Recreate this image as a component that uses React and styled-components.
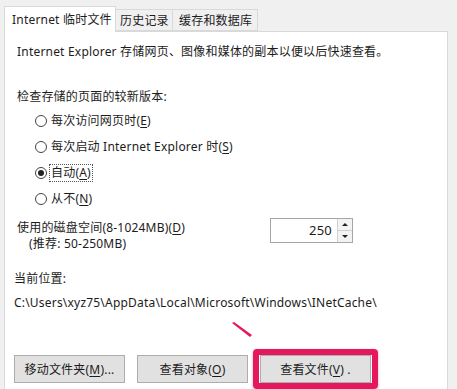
import React from "react";
import styled, { createGlobalStyle } from "styled-components";

const Global = createGlobalStyle`
  html, body { margin: 0; padding: 0; background: #f0f0f0; overflow: hidden; }
  * { box-sizing: border-box; }
`;

const FONT = `"Noto Sans", "Noto Sans CJK SC", sans-serif`;

const Dialog = styled.div`
  position: relative;
  width: 457px;
  height: 389px;
  padding: 5px 0 0 4px;
  font-family: ${FONT};
  font-size: 12px;
  letter-spacing: 0.2px;
  color: #1c1c1c;
  background: #f0f0f0;
  overflow: hidden;
`;

const TabBar = styled.div`
  display: flex;
  align-items: flex-end;
  height: 26px;
`;

const Tab = styled.div`
  position: relative;
  width: ${(p) => p.$w}px;
  height: ${(p) => (p.$active ? 26 : 22)}px;
  padding: 0 ${(p) => p.$pad || 4}px;
  margin-left: ${(p) => (p.$first ? 0 : -1)}px;
  margin-bottom: ${(p) => (p.$active ? -1 : 0)}px;
  display: flex;
  align-items: center;
  background: ${(p) => (p.$active ? "#fff" : "#f0f0f0")};
  border: 1px solid #d9d9d9;
  border-bottom: ${(p) => (p.$active ? "none" : "1px solid #d9d9d9")};
  z-index: ${(p) => (p.$active ? 2 : 1)};
  white-space: nowrap;
  line-height: 18px;
  padding-top: ${(p) => (p.$active ? 0 : 1)}px;
`;

const Panel = styled.div`
  width: 444px;
  height: 372px;
  background: #fff;
  border: 1px solid #d9d9d9;
  padding: 11px 0 0 12px;
`;

const Line = styled.div`
  line-height: 18px;
  height: 18px;
  white-space: nowrap;
  margin-top: ${(p) => p.$mt || 0}px;
  margin-left: ${(p) => p.$ml || 0}px;
`;

const RadioList = styled.div`
  margin-top: 2px;
  margin-left: 18px;
  display: flex;
  flex-direction: column;
`;

const RadioRow = styled.div`
  height: 26px;
  display: flex;
  align-items: center;
  gap: 2px;
  white-space: nowrap;
`;

const Circle = styled.span`
  width: 12px;
  height: 12px;
  border-radius: 50%;
  border: 1px solid #444;
  background: #fff;
  display: flex;
  align-items: center;
  justify-content: center;
  flex: none;
  &::after {
    content: "";
    display: ${(p) => (p.$checked ? "block" : "none")};
    width: 6px;
    height: 6px;
    border-radius: 50%;
    background: #222;
  }
`;

const RadioText = styled.span`
  line-height: 16px;
  padding: 0 1px;
  border: 1px dotted ${(p) => (p.$focus ? "#555" : "transparent")};
`;

const U = styled.span`
  text-decoration: underline;
  text-underline-offset: 2px;
`;

const DiskRow = styled.div`
  display: flex;
  align-items: flex-start;
  margin-top: 8px;
`;

const DiskLabel = styled.div`
  width: 253px;
  line-height: 16px;
  white-space: nowrap;
`;

const Indent = styled.div`
  padding-left: 12px;
`;

const Spin = styled.div`
  margin-top: -2px;
  width: 83px;
  height: 25px;
  display: flex;
  border: 1px solid #a6a6a6;
  background: #fff;
`;

const SpinInput = styled.div`
  flex: 1;
  text-align: right;
  padding-right: 5px;
  line-height: 23px;
  font-size: 13px;
`;

const SpinButtons = styled.div`
  width: 15px;
  display: flex;
  flex-direction: column;
  border-left: 1px solid #d0d0d0;
`;

const SpinBtn = styled.div`
  flex: 1;
  display: flex;
  align-items: center;
  justify-content: center;
  background: #f3f3f3;
  border-top: ${(p) => (p.$down ? "1px solid #d0d0d0" : "none")};
  &::after {
    content: "";
    width: 0;
    height: 0;
    border-left: 3px solid transparent;
    border-right: 3px solid transparent;
    ${(p) =>
      p.$down
        ? "border-top: 3px solid #222;"
        : "border-bottom: 3px solid #222;"}
  }
`;

const ButtonRow = styled.div`
  display: flex;
  align-items: center;
  margin-top: 37px;
  margin-left: -3px;
`;

const Button = styled.div`
  width: 111px;
  height: 28px;
  margin-left: ${(p) => p.$ml || 0}px;
  background: #e1e1e1;
  border: 1px solid #adadad;
  display: flex;
  align-items: center;
  justify-content: center;
  white-space: nowrap;
  flex: none;
`;

const Highlight = styled.div`
  margin-left: 5px;
  padding: 0 1px;
  border: 6px solid #e6185d;
  border-radius: 4px;
  box-shadow: 0 1px 3px rgba(160, 0, 50, 0.35);
  display: flex;
`;

const Arrow = styled.svg`
  position: absolute;
  left: 230px;
  top: 320px;
  width: 24px;
  height: 20px;
`;

export default function App() {
  return (
    <>
      <Global />
      <Dialog>
        <TabBar>
          <Tab $active $first $w={112} $pad={7}>Internet 临时文件</Tab>
          <Tab $w={58}>历史记录</Tab>
          <Tab $w={86} $pad={6}>缓存和数据库</Tab>
        </TabBar>
        <Panel>
          <Line>Internet Explorer 存储网页、图像和媒体的副本以便以后快速查看。</Line>
          <Line $mt={27}>检查存储的页面的较新版本:</Line>
          <RadioList>
            <RadioRow>
              <Circle />
              <RadioText>每次访问网页时(<U>E</U>)</RadioText>
            </RadioRow>
            <RadioRow>
              <Circle />
              <RadioText>每次启动 Internet Explorer 时(<U>S</U>)</RadioText>
            </RadioRow>
            <RadioRow>
              <Circle $checked />
              <RadioText $focus>自动(<U>A</U>)</RadioText>
            </RadioRow>
            <RadioRow>
              <Circle />
              <RadioText>从不(<U>N</U>)</RadioText>
            </RadioRow>
          </RadioList>
          <DiskRow>
            <DiskLabel>
              <div>使用的磁盘空间(8-1024MB)(<U>D</U>)</div>
              <Indent>(推荐: 50-250MB)</Indent>
            </DiskLabel>
            <Spin>
              <SpinInput>250</SpinInput>
              <SpinButtons>
                <SpinBtn />
                <SpinBtn $down />
              </SpinButtons>
            </Spin>
          </DiskRow>
          <Line $mt={18} $ml={-3}>当前位置:</Line>
          <Line $mt={6} $ml={-3}>C:\Users\xyz75\AppData\Local\Microsoft\Windows\INetCache\</Line>
          <ButtonRow>
            <Button>移动文件夹(<U>M</U>)...</Button>
            <Button $ml={12}>查看对象(<U>O</U>)</Button>
            <Highlight>
              <Button>查看文件(<U>V</U>) .</Button>
            </Highlight>
          </ButtonRow>
        </Panel>
        <Arrow viewBox="0 0 24 20">
          <polygon points="2,3 4,2 22,15 20,17" fill="#e6185d" />
        </Arrow>
      </Dialog>
    </>
  );
}
